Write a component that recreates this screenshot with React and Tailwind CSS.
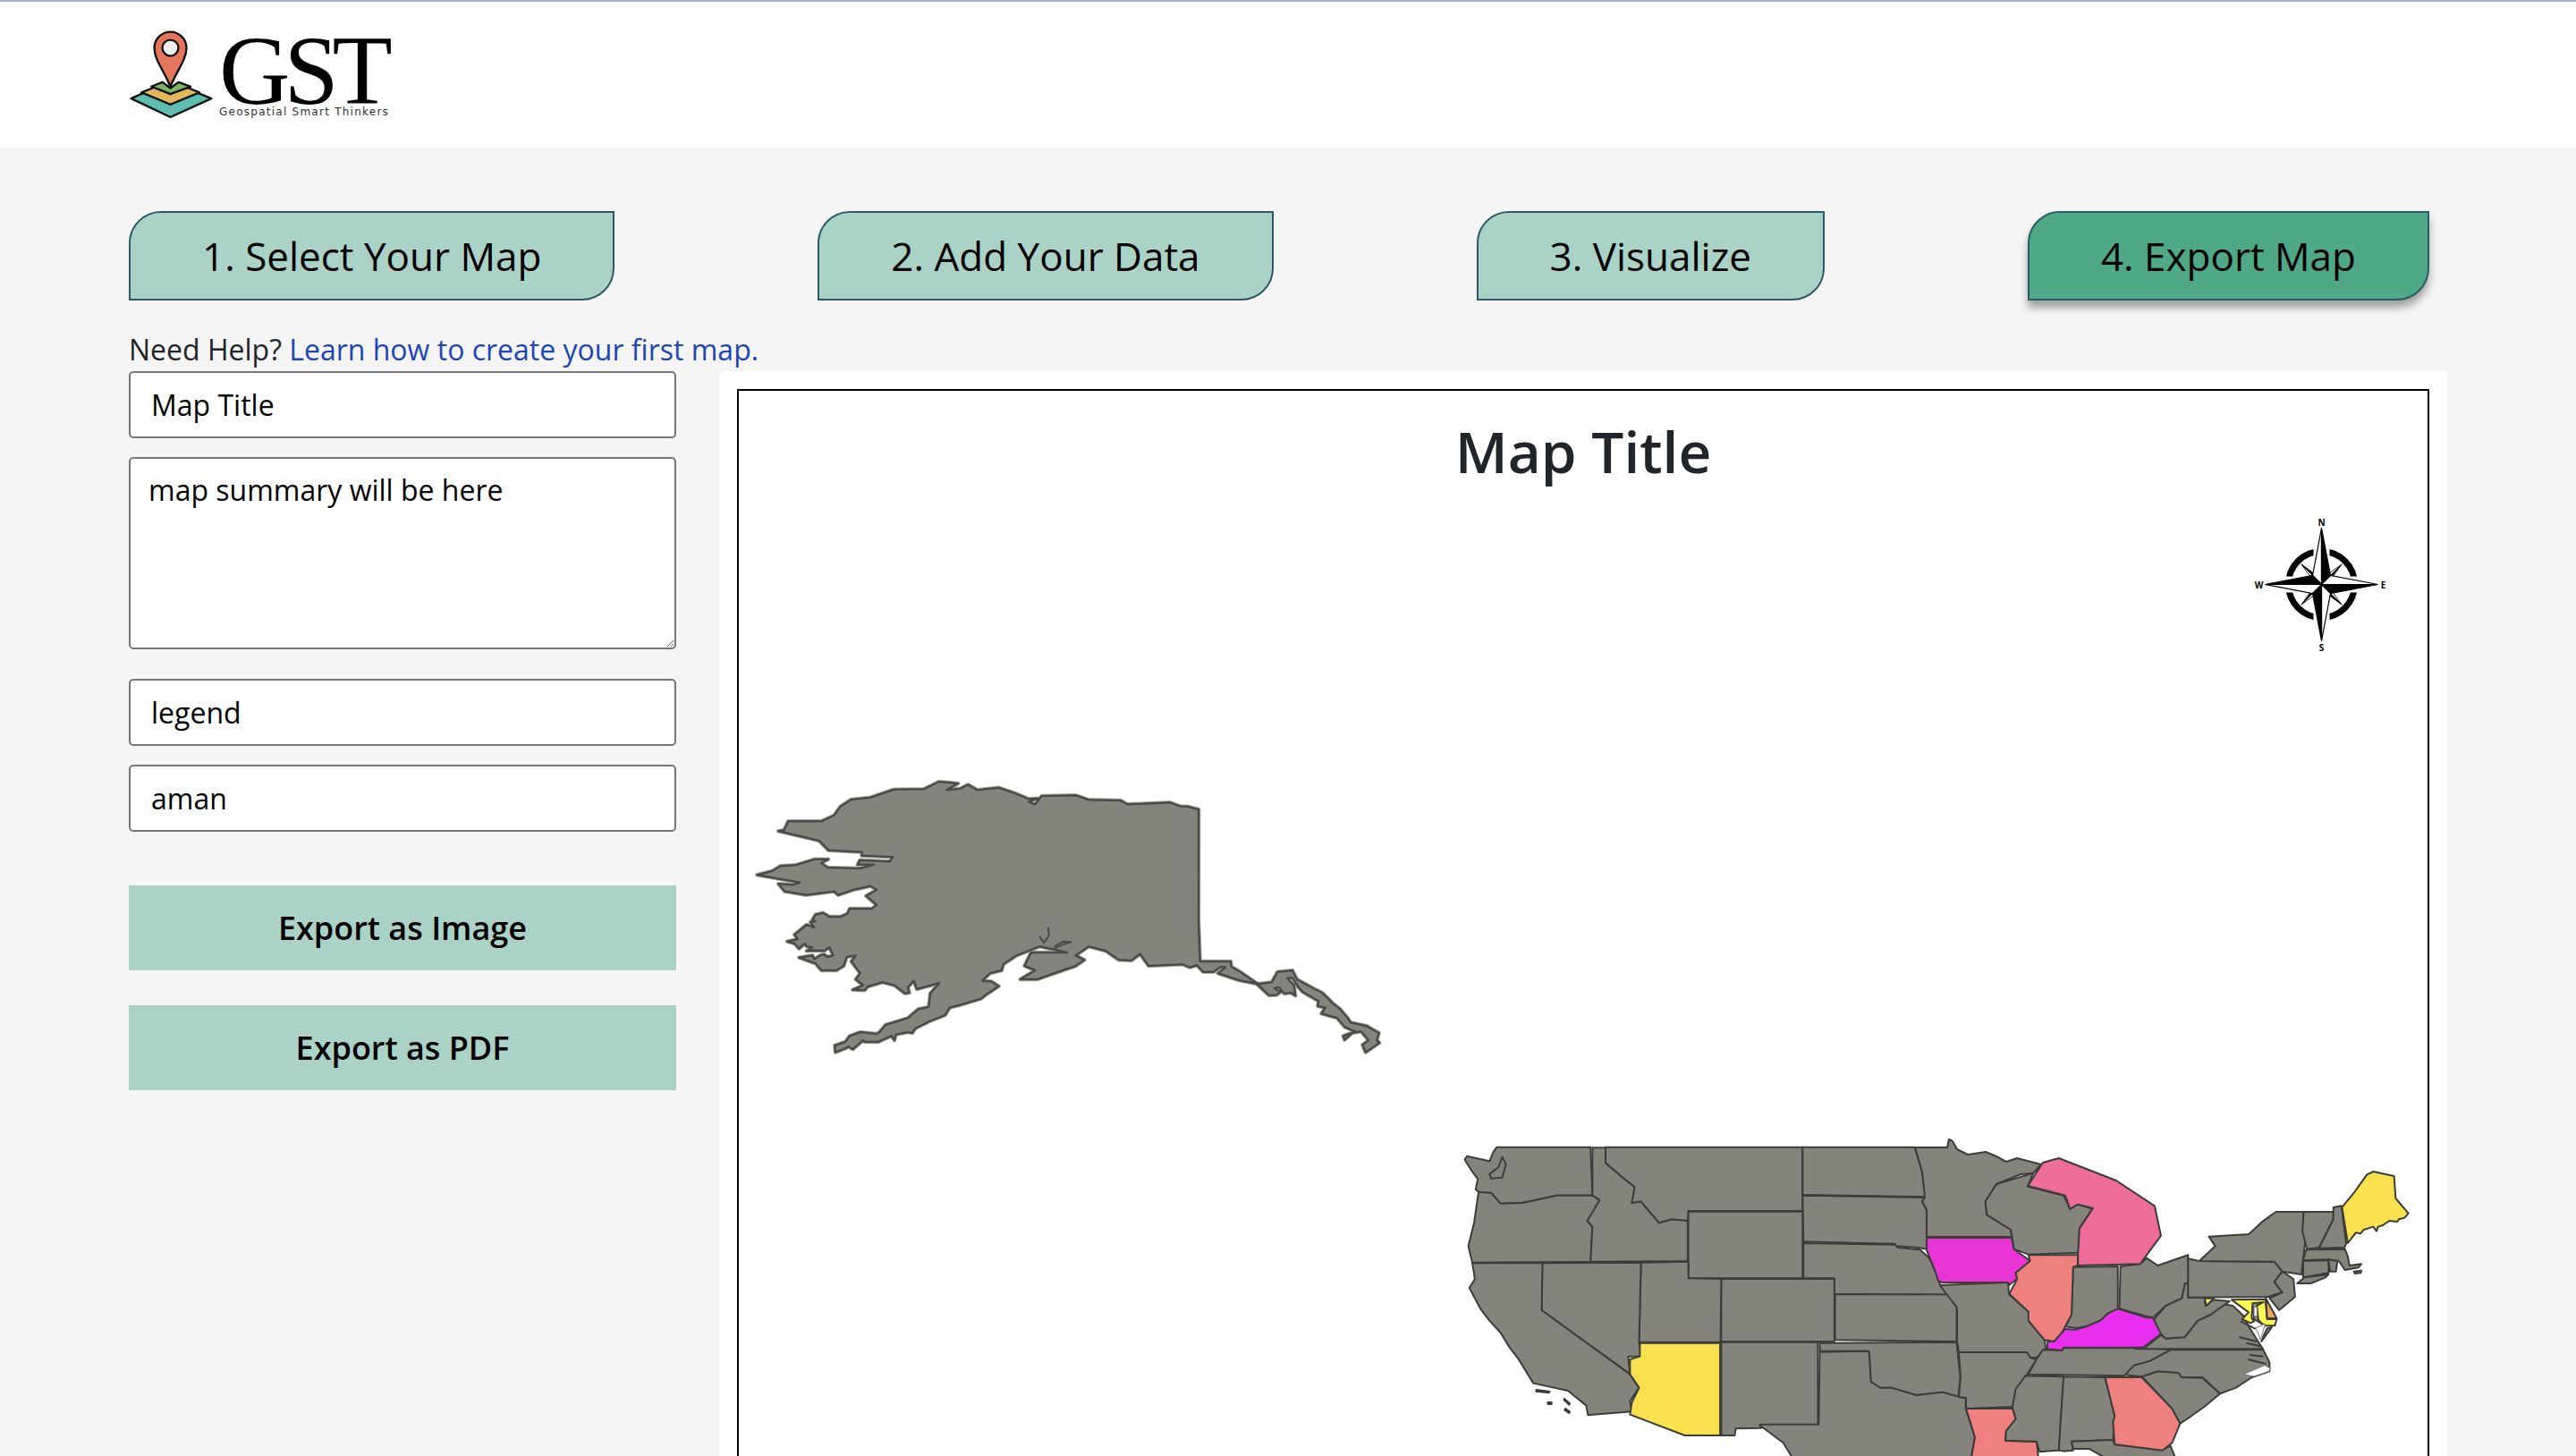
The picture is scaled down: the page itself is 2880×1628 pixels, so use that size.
const tabs = [
  { label: '1. Select Your Map' },
  { label: '2. Add Your Data' },
  { label: '3. Visualize' },
  { label: '4. Export Map', active: true },
];

const GREY = '#84847c';

// traced from crops of the map, each crop has its own offset and scale
const remap = (pts, ox, oy, sx, sy) =>
  pts
    .trim()
    .split(/\s+/)
    .map((p) => {
      const [x, y] = p.split(',').map(Number);
      return `${(ox + x * sx).toFixed(1)},${(oy + y * sy).toFixed(1)}`;
    })
    .join(' ');

const third = 1 / 3;

const AK_NORTH = '1087,165 1060,155 1045,155 1020,142 920,148 905,135 830,133 800,118 720,120 715,130 705,148 690,140 712,128 690,130 660,112 620,92 570,100 548,82 530,95 498,100 525,78 480,72 445,97 375,98 320,125 275,132 250,155 235,185 205,205 128,205 118,235 105,238 200,270 222,302 300,308 300,320 372,325 365,340 295,335 290,350 328,350 295,363 220,360 205,345 222,332 190,332 145,352 110,355 90,372 55,385 155,410 140,418 105,415 120,440 170,452 235,440 245,452 280,435 320,422 335,435 310,455';
const AK_SOUTHWEST = '420,35 405,48 330,48 322,65 300,75 262,75 240,62 215,68 205,85 215,90 198,92 210,110 185,102 145,135 155,150 120,158 145,165 160,182 180,165 185,175 205,178 185,190 215,188 245,190 262,177 267,190 275,205 255,210 245,202 230,205 212,217 205,205 160,212 215,232 235,255 285,255 310,240 320,210 350,205 335,225 365,265 350,285 375,305 340,320 380,322 390,310 440,295 480,305 515,332 530,330 525,312 545,290 555,318 630,298 600,332 595,378 560,385 525,415 450,438 430,462 420,468 365,462 330,475 315,495 280,507 282,530 320,515 325,510 340,520 375,490 380,495 425,495 470,475 480,490 485,470 525,462 540,465 550,450 600,425 650,405 665,380 705,370 770,350 785,338 830,308 805,292 775,290 800,265 840,255 845,235 890,205';
const AK_GULF = '715,625 750,635 780,645 695,645 680,690 705,705 670,735 710,735 750,715 800,690 820,670 800,655 830,625 870,640 900,670 930,672 950,650 970,690 1050,685';
const AK_PANHANDLE = '0,155 25,148 45,170 80,170 105,153 120,155 95,175 165,198 225,210 265,248 290,248 305,238 285,225 300,222 315,240 318,243 340,240 355,250 350,215 328,192 345,190 365,222 380,238 415,258 432,268 430,285 455,290 442,310 470,318 495,325 520,355 555,370 515,385 520,398 545,375 575,370 600,400 580,415 590,440 637,408 628,400 635,375 595,352 540,340 530,325 505,295 480,275 445,240 415,225 360,195 345,165 295,170 275,205 235,210 225,208 170,170 140,152 138,135 35,135 30,0';

const ALASKA = [
  remap(AK_NORTH, 820, 850, 0.4785, third),
  remap(AK_SOUTHWEST, 840, 1000, third, third),
  remap(AK_GULF, 820, 850, 0.4785, third),
  remap(AK_PANHANDLE, 1330, 1030, third, third),
].join(' ');

const WEST = [
  ['180,98 437,98 442,260 345,260 250,285 190,287 165,252 130,248 122,240 128,205 110,175 92,140 98,128 160,145 170,115'],
  ['130,248 165,252 190,287 250,285 345,260 442,260 462,275 450,310 428,345 442,365 437,482 113,485 102,430 118,350'],
  ['442,100 478,100 478,150 520,195 558,232 550,285 575,280 625,352 660,340 703,345 703,480 437,482 442,365 428,345 462,275 442,260'],
  ['478,98 1018,98 1018,312 705,312 703,345 660,340 625,352 575,280 550,285 558,232 520,195 478,150'],
  ['1018,98 1325,98 1345,180 1355,265 1018,258'],
  ['1018,260 1353,267 1345,280 1358,310 1358,440 1335,435 1275,430 1270,422 1020,415'],
  ['1020,420 1270,425 1280,435 1340,442 1365,470 1380,510 1395,560 1425,595 1105,590 1105,538 1020,538'],
  ['705,314 1018,314 1018,538 705,538'],
  ['795,540 1105,540 1105,750 795,750'],
  ['1107,592 1415,592 1440,635 1440,750 1107,745'],
  ['575,485 705,482 705,538 795,540 793,752 570,752'],
  ['305,487 575,485 570,752 575,800 540,800 545,860 303,645'],
  ['113,487 305,487 303,645 545,860 570,905 545,950 550,985 430,997 425,965 375,915 280,890 240,810 215,770 190,720 160,680 135,640 105,570 120,540'],
  ['572,755 792,755 792,1065 695,1065 545,995 550,955 570,905 545,860 545,810 572,800', '#f9e04f'],
  ['795,752 1060,752 1060,1028 900,1030 905,1040 835,1042 832,1065 795,1065'],
  ['1065,755 1440,752 1450,870 1445,935 1400,920 1330,930 1260,905 1230,905 1205,885 1200,782 1065,782'],
  ['1065,785 1200,782 1205,885 1230,905 1260,905 1330,930 1400,920 1445,935 1465,940 1465,975 1490,1070 1480,1140 990,1140 965,1090 905,1035 905,1028 1062,1028'],
  ['288,912 325,918 322,922 288,917'],
  ['320,954 330,954 330,960 320,960'],
  ['365,942 380,958 378,962 364,946'],
  ['368,975 380,985 378,990 366,980'],
];

// these run across both detail crops, so they are in page coordinates
const MIDDLE = [
  ['2141,1283 2177,1283 2179,1274 2183,1276 2188,1285 2200,1291 2220,1288 2232,1293 2243,1299 2255,1295 2282,1302 2273,1312 2259,1313 2232,1324 2220,1343 2221,1358 2248,1375 2249,1383 2154,1383 2154,1353 2149,1343 2152,1339 2149,1310'],
  ['2154,1384 2249,1384 2252,1397 2270,1410 2254,1423 2255,1430 2246,1437 2245,1434 2171,1434 2167,1432 2163,1420 2154,1398', '#e835d4'],
  ['2169,1437 2245,1434 2246,1447 2268,1467 2268,1477 2286,1498 2287,1508 2277,1518 2268,1518 2266,1512 2190,1512 2188,1500 2188,1462 2177,1448'],
  ['2190,1512 2266,1512 2270,1518 2277,1520 2266,1537 2254,1553 2250,1573 2198,1575 2198,1563 2190,1562 2192,1540'],
  ['2198,1575 2250,1575 2254,1587 2243,1600 2242,1611 2277,1612 2279,1630 2204,1630 2208,1607', '#ef8080'],
];

const EAST = [
  ['180,865 300,868 285,1115 225,1120 215,1085 118,1082 120,1050 150,1010 140,970 150,910'],
  ['300,868 430,870 460,1000 455,1080 325,1085 330,1115 300,1118 285,1115'],
  ['325,1085 455,1080 460,1095 605,1115 635,1100 650,1140 430,1140 380,1110 330,1110'],
  ['430,870 545,870 640,975 665,1025 640,1090 610,1115 460,1095 455,1020 460,1000', '#ef8080'],
  ['545,868 595,850 660,855 670,870 735,872 790,925 740,970 700,1000 665,1025 640,975'],
  ['490,862 520,830 570,815 635,778 925,778 945,820 945,850 890,870 840,905 790,925 735,870 670,870 660,855 595,850 545,868'],
  ['235,778 295,780 300,772 550,772 635,778 570,815 520,830 490,865 190,860 215,810'],
  ['555,770 605,728 620,740 680,735 720,680 760,660 800,625 830,630 865,665 880,700 915,760 925,775 525,775'],
  ['580,680 620,630 670,605 680,555 690,555 690,602 740,602 745,630 770,610 820,615 760,660 720,680 680,735 620,740 605,725'],
  ['478,498 540,490 560,470 595,495 690,460 690,555 680,555 670,605 620,630 580,670 560,665 475,640'],
  ['330,500 470,498 470,640 440,655 415,680 370,700 340,705 305,700 325,660'],
  ['190,460 345,460 345,495 330,500 325,660 305,700 285,740 270,750 240,745 190,680 190,650 130,590 155,540 150,520 195,480', '#ef8080'],
  ['205,185 90,222 55,280 60,325 135,375 145,440 190,458 348,452 350,370 390,305 345,290 320,305 300,260 188,230'],
  ['188,228 235,150 285,135 465,210 500,235 585,295 605,395 560,460 540,490 345,495 345,455 350,370 392,303 345,290 320,305 305,260', '#ee6c9a'],
  ['250,750 270,750 305,708 340,710 370,700 415,680 440,655 470,640 560,670 580,670 605,725 550,770 300,770 295,780 248,775', '#ea2eef'],
  ['690,472 725,480 960,482 985,515 960,550 985,585 940,600 690,602'],
  ['755,398 880,390 920,350 965,315 1050,315 1060,380 1045,525 985,515 960,482 725,480 775,430'],
  ['985,515 1020,540 1025,600 975,645 945,605 985,585 960,550'],
  ['1052,315 1145,315 1145,340 1100,435 1062,440 1048,380'],
  ['1145,300 1170,295 1185,420 1180,435 1100,437 1145,340'],
  ['1172,300 1210,250 1250,190 1270,180 1335,195 1340,270 1380,320 1368,335 1350,340 1345,348 1320,345 1300,360 1285,365 1280,380 1270,365 1240,375 1230,388 1215,385 1190,420', '#f9e04f'],
];

// mid-atlantic and new england coast, from a tighter crop
const COAST = [
  ['415,112 545,110 555,135 560,165 600,160 590,172 545,180 525,150 490,145 405,148'],
  ['405,150 490,148 490,190 405,205'],
  ['490,145 520,150 515,185 495,185'],
  ['575,185 600,182 598,190 578,192'],
  ['385,225 410,205 490,195 480,205 430,225'],
  ['75,275 105,275 80,300', '#fefa50'],
  ['165,280 278,278 284,345 316,345 310,367 278,367 252,350 245,300 235,300 232,340 240,352 228,358 200,345 222,322', '#fefa50'],
  ['235,292 272,288 250,300 254,345 265,360 240,345', '#8f8f88'],
  ['280,275 316,342 284,342', '#f2a45c'],
  ['300,372 265,420 275,395 285,375'],
];

const COAST_WHITE = [
  '245,375 278,360 262,415 255,395',
  '275,500 295,510 290,520 240,537 205,530 240,515',
  '240,305 250,305 250,335 240,335',
];

const COAST_LINES = [
  '195,352 245,378',
  '190,405 250,420',
  '215,425 262,436',
  '225,465 270,470',
  '220,480 280,495',
  '290,270 335,255',
];

const Land = ({ items }) =>
  items.map(([points, fill], i) => (
    <polygon
      key={i}
      points={points}
      fill={fill || GREY}
      stroke="#3c3c3a"
      strokeWidth="2"
      strokeLinejoin="round"
      vectorEffect="non-scaling-stroke"
    />
  ));

const Compass = () => (
  <g transform="translate(2595.5 653.5)">
    <circle r="37" fill="none" stroke="#000" strokeWidth="7" />
    {[0, 90, 180, 270].map((a) => (
      <polygon key={a} transform={`rotate(${a})`} points="-9,-20 9,-20 9,-44 -9,-44" fill="#fff" />
    ))}
    <g stroke="#000" strokeWidth="0.8">
      {[45, 135, 225, 315].map((a) => (
        <g key={a} transform={`rotate(${a})`}>
          <polygon points="0,-32 0,-6 -4,-6" fill="#fff" />
          <polygon points="0,-32 0,-6 4,-6" fill="#000" />
        </g>
      ))}
    </g>
    {[0, 90, 180, 270].map((a) => (
      <g key={a} transform={`rotate(${a})`}>
        <polygon points="0,-63 0,0 -10,-10" fill="#fff" stroke="#000" strokeWidth="1.2" />
        <polygon points="0,-63 0,0 10,-10" fill="#000" stroke="#000" strokeWidth="1.2" />
      </g>
    ))}
    <text x="0" y="-66" textAnchor="middle" fontSize="10" fontWeight="700" fontFamily="Open Sans">N</text>
    <text x="0" y="74" textAnchor="middle" fontSize="10" fontWeight="700" fontFamily="Open Sans">S</text>
    <text x="-70" y="4" textAnchor="middle" fontSize="10" fontWeight="700" fontFamily="Open Sans">W</text>
    <text x="69" y="4" textAnchor="middle" fontSize="10" fontWeight="700" fontFamily="Open Sans">E</text>
  </g>
);

const LogoMark = () => (
  <svg viewBox="130 100 290 310" className="w-[97px] h-[103px]">
    <g stroke="#111" strokeWidth="7" strokeLinejoin="round">
      <polygon points="140,335 185,315 272,355 360,315 410,335 272,398" fill="#5cbdb0" />
      <polygon points="175,315 225,295 272,320 320,295 370,315 272,355" fill="#e3b75e" />
      <polygon points="208,295 245,280 272,300 300,280 340,295 272,320" fill="#7db46c" />
      <path d="M272 295 C250 240 218 205 218 165 A54 54 0 1 1 326 165 C326 205 294 240 272 295Z" fill="#e5765c" />
      <circle cx="272" cy="165" r="27" fill="#eee" />
    </g>
  </svg>
);

const fieldClass = 'block w-full bg-white border-2 border-[#767676] rounded-[5px] text-[32px] text-black outline-none';

export default function App() {
  return (
    <div className="h-screen overflow-hidden bg-[#f5f5f5] font-['Open_Sans',sans-serif] text-[#212529]">
      <header className="h-[165px] bg-white border-t-2 border-[#a5b0cc] pl-[143px] flex items-center">
        <LogoMark />
        <div className="ml-[5px] mt-[4px] flex flex-col">
          <span className="font-['Liberation_Serif',serif] text-[110px] leading-[78px] tracking-[-7px] text-black">GST</span>
          <span className="font-['DejaVu_Sans',sans-serif] text-[12px] leading-[14px] tracking-[1.25px] text-[#333]">Geospatial Smart Thinkers</span>
        </div>
      </header>

      <main className="pl-[144px] pr-[144px] pt-[71px]">
        <nav className="flex justify-between pr-[20px]">
          {tabs.map((tab) => (
            <div
              key={tab.label}
              className={`h-[100px] px-[80px] flex items-center border-2 border-[#2c5a66] rounded-tl-[36px] rounded-br-[36px] text-[44px] text-black ${tab.active ? 'bg-[#4fa886] shadow-[0_8px_10px_rgba(0,0,0,0.35)]' : 'bg-[#abd2c6]'}`}
            >
              {tab.label}
            </div>
          ))}
        </nav>

        <p className="mt-[31px] h-[48px] text-[32px] leading-[48px]">
          Need Help? <a className="text-[#1b45b8]">Learn how to create your first map.</a>
        </p>

        <div className="flex gap-[48px]">
          <aside className="w-[612px] shrink-0">
            <input readOnly defaultValue="Map Title" className={`${fieldClass} h-[75px] px-[23px]`} />
            <textarea readOnly defaultValue="map summary will be here" className={`${fieldClass} h-[215px] mt-[21px] px-[20px] py-[13px] leading-[44px]`} />
            <input readOnly defaultValue="legend" className={`${fieldClass} h-[75px] mt-[33px] px-[23px]`} />
            <input readOnly defaultValue="aman" className={`${fieldClass} h-[75px] mt-[21px] px-[23px]`} />
            <button className="block w-full h-[95px] mt-[60px] bg-[#abd2c6] text-[36px] font-semibold text-black">Export as Image</button>
            <button className="block w-full h-[95px] mt-[39px] bg-[#abd2c6] text-[36px] font-semibold text-black">Export as PDF</button>
          </aside>

          <section className="flex-1 bg-white p-[20px]">
            <div className="relative h-[1400px] border-2 border-black">
              <h1 className="pt-[26px] text-center text-[64px] leading-[84px] font-semibold">Map Title</h1>
              <svg viewBox="826 437 1888 1191" className="absolute left-0 top-0 w-[1888px] h-[1191px]">
                <Compass />
                <polygon points={ALASKA} fill={GREY} stroke="#b0b0aa" strokeWidth="4.5" strokeLinejoin="round" />
                <polygon points={ALASKA} fill={GREY} stroke="#4a4a48" strokeWidth="2.5" strokeLinejoin="round" />
                <polyline points={remap('715,590 725,612 737,590 735,560', 820, 850, 0.4785, third)} fill="none" stroke="#4a4a48" strokeWidth="2" />
                <polyline points={remap('750,625 770,608 790,610 770,618 750,632', 820, 850, 0.4785, third)} fill="none" stroke="#4a4a48" strokeWidth="2" />
                <g transform="translate(1600 1250) scale(0.408 0.3333)">
                  <Land items={WEST} />
                  <polyline points="195,130 205,155 195,200 165,203 160,188 185,165 195,130" fill="none" stroke="#3c3c3a" strokeWidth="2" vectorEffect="non-scaling-stroke" />
                </g>
                <Land items={MIDDLE} />
                <g transform="translate(2200 1250) scale(0.357 0.3333)">
                  <Land items={EAST} />
                </g>
                <g transform="translate(2440 1360) scale(0.3333)">
                  <Land items={COAST} />
                  {COAST_WHITE.map((points) => (
                    <polygon key={points} points={points} fill="#fff" stroke="#777" strokeWidth="1" vectorEffect="non-scaling-stroke" />
                  ))}
                  {COAST_LINES.map((points) => (
                    <polyline key={points} points={points} fill="none" stroke="#3c3c3a" strokeWidth="2" vectorEffect="non-scaling-stroke" />
                  ))}
                </g>
              </svg>
            </div>
          </section>
        </div>
      </main>
    </div>
  );
}
